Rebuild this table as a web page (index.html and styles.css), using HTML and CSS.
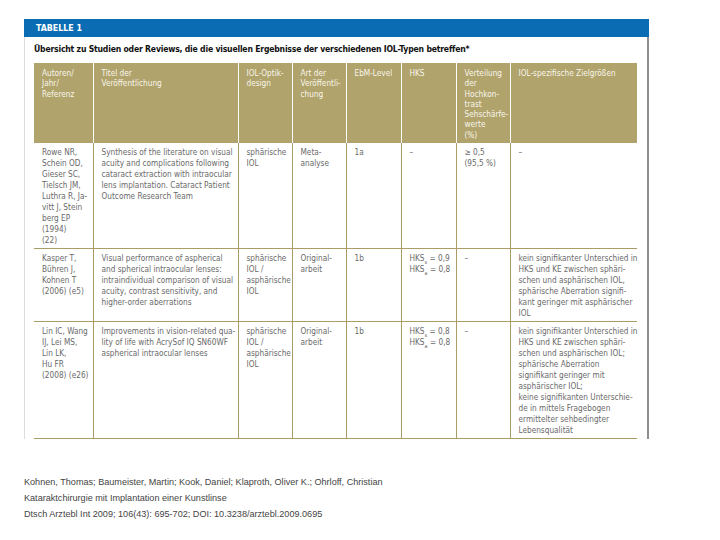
FILE: index.html
```html
<!DOCTYPE html>
<html lang="de">
<head>
<meta charset="utf-8">
<title>Tabelle 1</title>
<link rel="stylesheet" href="styles.css">
</head>
<body>
<div class="figure">
  <div class="bar">TABELLE 1</div>
  <div class="panel">
    <div class="caption">Übersicht zu Studien oder Reviews, die die visuellen Ergebnisse der verschiedenen IOL-Typen betreffen*</div>
    <table class="tbl">
      <colgroup>
        <col class="c1"><col class="c2"><col class="c3"><col class="c4"><col class="c5"><col class="c6"><col class="c7"><col class="c8">
      </colgroup>
      <thead>
        <tr>
          <th>Autoren/<br>Jahr/<br>Referenz</th>
          <th>Titel der<br>Veröffentlichung</th>
          <th>IOL-Optik-<br>design</th>
          <th>Art der<br>Veröffentli-<br>chung</th>
          <th>EbM-Level</th>
          <th>HKS</th>
          <th>Verteilung<br>der<br>Hochkon-<br>trast<br>Sehschärfe-<br>werte<br>(%)</th>
          <th>IOL-spezifische Zielgrößen</th>
        </tr>
      </thead>
      <tbody>
        <tr class="r1">
          <td>Rowe NR,<br>Schein OD,<br>Gieser SC,<br>Tielsch JM,<br>Luthra R, Ja-<br>vitt J, Stein<br>berg EP<br>(1994)<br>(22)</td>
          <td>Synthesis of the literature on visual<br>acuity and complications following<br>cataract extraction with intraocular<br>lens implantation. Cataract Patient<br>Outcome Research Team</td>
          <td>sphärische<br>IOL</td>
          <td>Meta-<br>analyse</td>
          <td>1a</td>
          <td>–</td>
          <td>≥ 0,5<br>(95,5 %)</td>
          <td>–</td>
        </tr>
        <tr class="r2">
          <td>Kasper T,<br>Bühren J,<br>Kohnen T<br>(2006) (e5)</td>
          <td>Visual performance of aspherical<br>and spherical intraocular lenses:<br>intraindividual comparison of visual<br>acuity, contrast sensitivity, and<br>higher-order aberrations</td>
          <td>sphärische<br>IOL /<br>asphärische<br>IOL</td>
          <td>Original-<br>arbeit</td>
          <td>1b</td>
          <td>HKS<sub>s</sub> = 0,9<br>HKS<sub>a</sub> = 0,8</td>
          <td>–</td>
          <td>kein signifikanter Unterschied in<br>HKS und KE zwischen sphäri-<br>schen und asphärischen IOL,<br>sphärische Aberration signifi-<br>kant geringer mit asphärischer<br>IOL</td>
        </tr>
        <tr class="r3">
          <td>Lin IC, Wang<br>IJ, Lei MS,<br>Lin LK,<br>Hu FR<br>(2008) (e26)</td>
          <td>Improvements in vision-related qua-<br>lity of life with AcrySof IQ SN60WF<br>aspherical intraocular lenses</td>
          <td>sphärische<br>IOL /<br>asphärische<br>IOL</td>
          <td>Original-<br>arbeit</td>
          <td>1b</td>
          <td>HKS<sub>s</sub> = 0,8<br>HKS<sub>a</sub> = 0,8</td>
          <td>–</td>
          <td>kein signifikanter Unterschied in<br>HKS und KE zwischen sphäri-<br>schen und asphärischen IOL;<br>sphärische Aberration<br>signifikant geringer mit<br>asphärischer IOL;<br>keine signifikanten Unterschie-<br>de in mittels Fragebogen<br>ermittelter sehbedingter<br>Lebensqualität</td>
        </tr>
      </tbody>
    </table>
  </div>
</div>
<div class="footer">
  <p>Kohnen, Thomas; Baumeister, Martin; Kook, Daniel; Klaproth, Oliver K.; Ohrloff, Christian</p>
  <p>Kataraktchirurgie mit Implantation einer Kunstlinse</p>
  <p>Dtsch Arztebl Int 2009; 106(43): 695-702; DOI: 10.3238/arztebl.2009.0695</p>
</div>
</body>
</html>
```
FILE: styles.css
```css
html, body {
  margin: 0;
  padding: 0;
  background: #ffffff;
}
body {
  font-family: "DejaVu Sans Condensed", "DejaVu Sans", "Liberation Sans", sans-serif;
  font-stretch: condensed;
}
.figure {
  margin: 19px 0 0 24px;
  width: 625px;
}
.bar {
  height: 18px;
  background: #0a6db3;
  color: #ffffff;
  font-weight: bold;
  font-size: 8.8px;
  line-height: 19px;
  padding-left: 12px;
}
.panel {
  border-left: 1px solid #dcdcdc;
  border-right: 2px solid #8e8e8e;
  padding: 0 10px 0 9px;
}
.caption {
  font-weight: bold;
  font-size: 8.6px;
  letter-spacing: -0.2px;
  line-height: 14px;
  padding-top: 5px;
  color: #111111;
  margin-bottom: 7px;
}
.tbl {
  border-collapse: collapse;
  table-layout: fixed;
  width: 603px;
}
.c1 { width: 59px; }
.c2 { width: 145px; }
.c3 { width: 54px; }
.c4 { width: 54px; }
.c5 { width: 55px; }
.c6 { width: 55px; }
.c7 { width: 54px; }
.c8 { width: 127px; }
.tbl th {
  background: #b0a36b;
  color: #f9f6ec;
  font-weight: normal;
  font-size: 8.2px;
  line-height: 10.3px;
  text-align: left;
  vertical-align: top;
  padding: 5px 2px 3px 8px;
  border-left: 1px solid #ffffff;
  white-space: nowrap;
}
.tbl th:first-child {
  border-left: none;
}
.tbl td {
  color: #6a6a6a;
  font-size: 8.2px;
  line-height: 11px;
  vertical-align: top;
  padding: 4px 2px 2px 8px;
  border-left: 1px solid #a99c66;
  border-bottom: 1px solid #a99c66;
  white-space: nowrap;
}
.tbl td:first-child {
  border-left: none;
}
.tbl sub {
  font-size: 5.5px;
  line-height: 0;
}
.footer {
  margin: 35px 0 0 24px;
  font-family: "Liberation Sans", Arial, sans-serif;
  font-stretch: normal;
  font-size: 9.1px;
  color: #444444;
}
.footer p {
  margin: 0;
  line-height: 16px;
}
```
